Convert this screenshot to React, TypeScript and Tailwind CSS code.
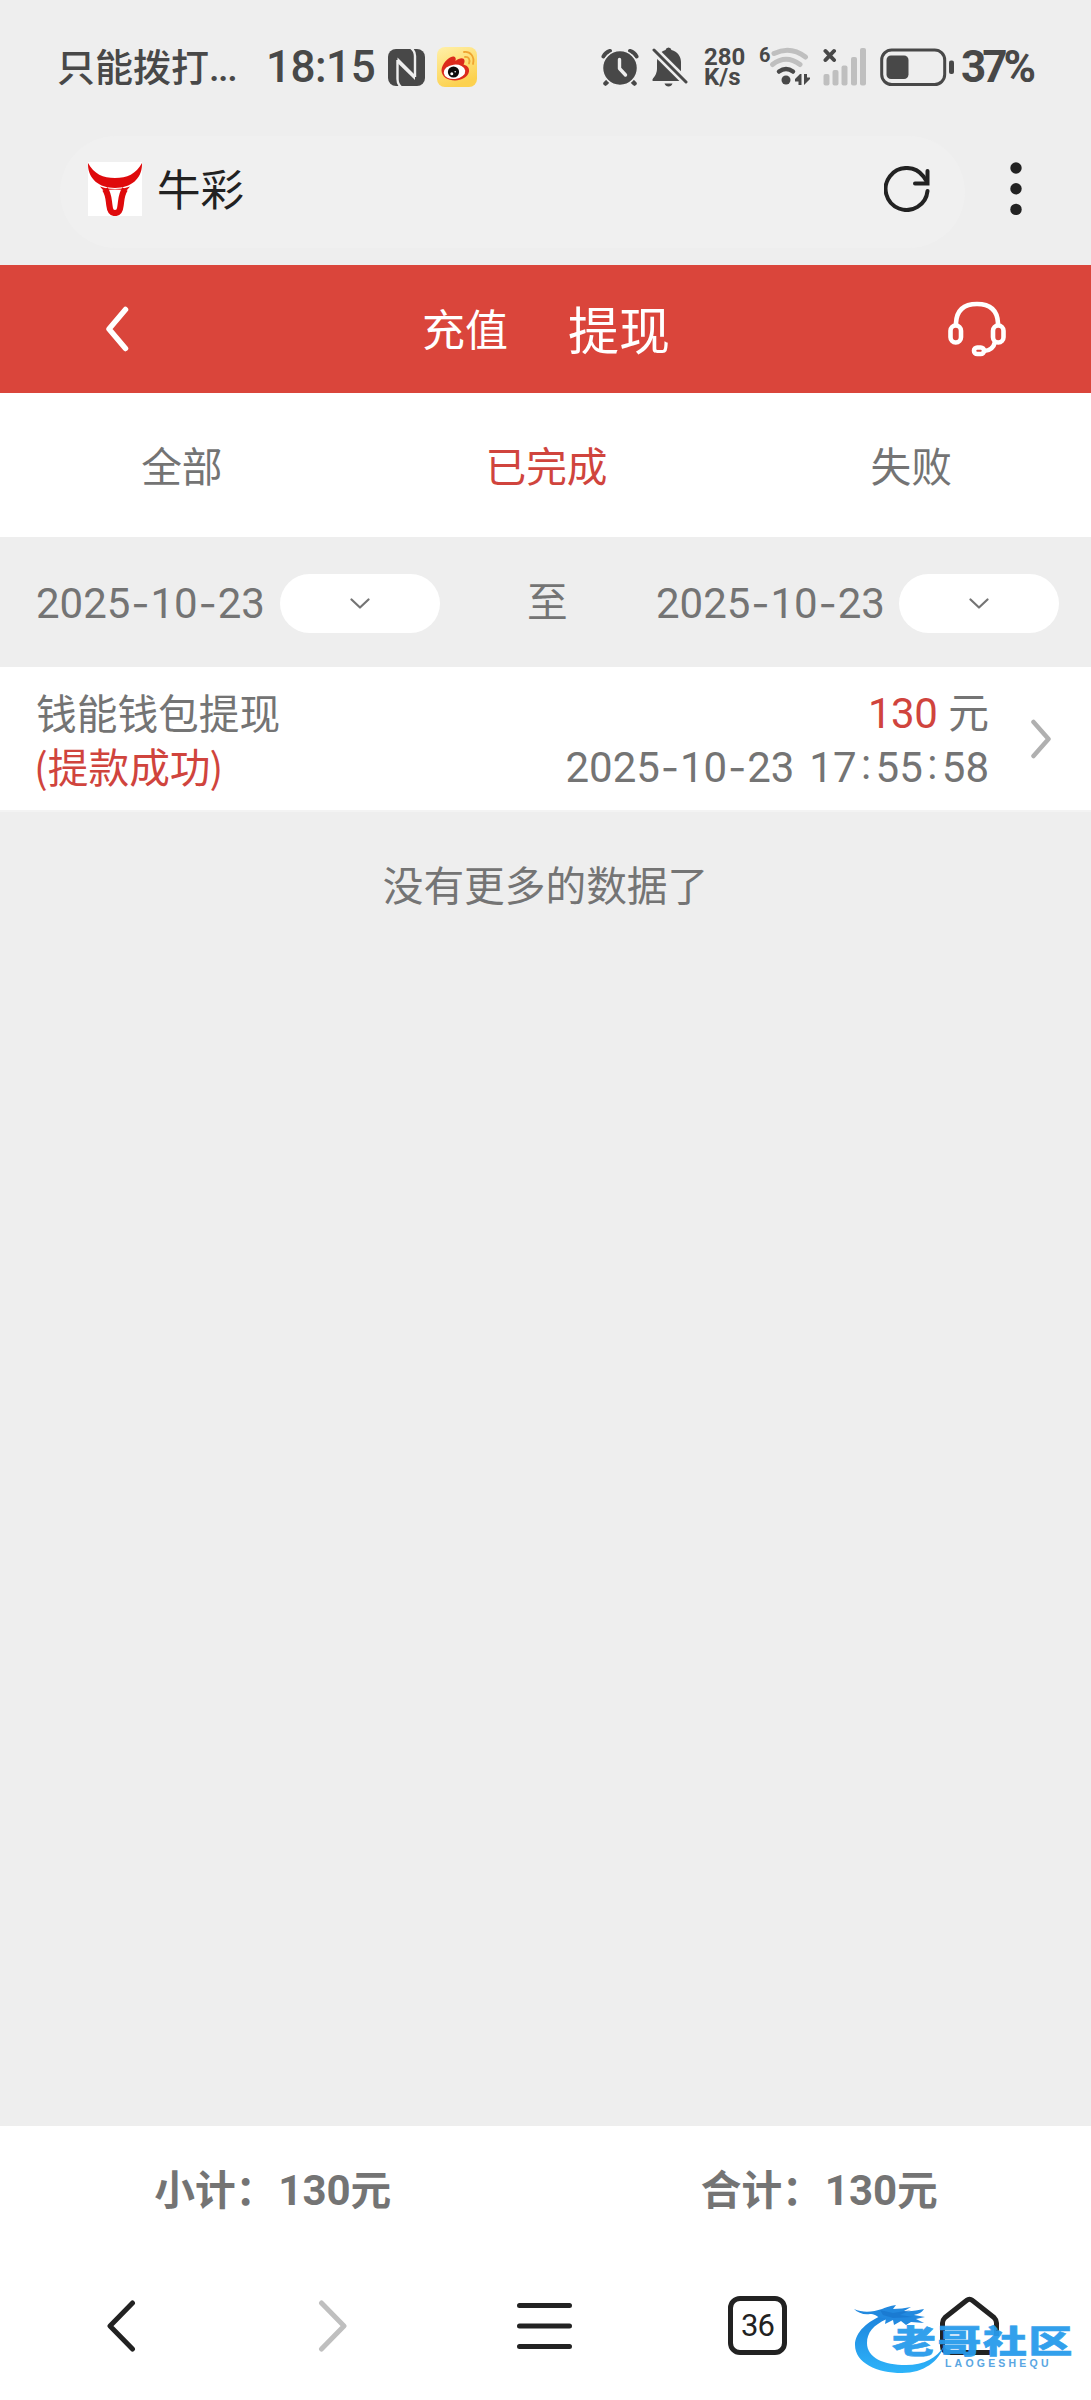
import React from "react";

const cjk = "font-['Noto_Sans_CJK_SC',sans-serif]";

/** Digits with wide dashes and colons, as in a DIN-like face. */
function Stamp({ text }: { text: string }) {
  return (
    <span className="font-[Roboto,sans-serif] text-[42px] whitespace-pre">
      {text.split(/([-: ])/).map((part, i) => {
        if (part === "-")
          return (
            <span key={i} className="inline-block w-[20px] text-center font-[Inter,sans-serif] text-[40px]">
              -
            </span>
          );
        if (part === ":")
          return (
            <span key={i} className="relative -top-[3px] inline-block w-[19px] text-center">
              :
            </span>
          );
        if (part === " ")
          return (
            <span key={i} className="inline-block w-[15px]">
              {" "}
            </span>
          );
        return <span key={i}>{part}</span>;
      })}
    </span>
  );
}

function NfcIcon() {
  return (
    <svg className="ml-[14px] size-[37px]" viewBox="0 0 37 37" fill="none">
      <rect width="37" height="37" rx="8" fill="#484848" />
      <path d="M9.500 11V30Q9.500 35 13 38" stroke="#eeeeee" strokeWidth="2.400" />
      <path d="M9.500 8.500L27 26V31L9.500 14Z" fill="#eeeeee" />
      <path d="M27 28V7Q27 2 23 -1" stroke="#eeeeee" strokeWidth="2.400" />
    </svg>
  );
}

function WeiboIcon() {
  return (
    <svg className="ml-[12px] size-[40px]" viewBox="0 0 40 40" fill="none">
      <defs>
        <linearGradient id="wb" x1="0" y1="0" x2="0.4" y2="1">
          <stop offset="0" stopColor="#fff0a8" />
          <stop offset="1" stopColor="#fcd14f" />
        </linearGradient>
      </defs>
      <rect width="40" height="40" rx="8" fill="url(#wb)" />
      <path
        d="M4.500 23C5 17 11 10 16 9.500C19 9.500 19 12 18.500 14C22 11 27 10 27.500 13.500C27.800 15 27 16.500 26.500 17.500C30 18.500 32.500 20.500 32 24.500C31 30 24.500 33.500 18 33.500C11 33.500 4.500 30 4.500 23Z"
        fill="#dc2a1c"
      />
      <ellipse cx="17.500" cy="24.800" rx="10.800" ry="7.200" fill="#fff" transform="rotate(-6 17.500 24.800)" />
      <circle cx="16.500" cy="25" r="5.600" fill="#0c0c0c" />
      <circle cx="14.800" cy="26.800" r="1.500" fill="#fff" />
      <circle cx="18.200" cy="24.800" r="0.800" fill="#fff" />
      <path d="M27 5C33 4 38 9.500 36 17" stroke="#efa532" strokeWidth="1.800" strokeLinecap="round" />
      <path d="M28 10C31.500 9.500 33.500 12.500 32 16.500" stroke="#efa532" strokeWidth="1.800" strokeLinecap="round" />
    </svg>
  );
}

function AlarmIcon() {
  return (
    <svg className="h-[38px] w-[38px]" viewBox="0 0 38 38" fill="none">
      <g stroke="#484848" strokeLinecap="round">
        <path d="M2.500 8.500Q4.500 4.500 9 3" strokeWidth="4" />
        <path d="M35.500 8.500Q33.500 4.500 29 3" strokeWidth="4" />
        <path d="M8 32L4.500 35.500M30 32L33.500 35.500" strokeWidth="4.500" />
      </g>
      <circle cx="19" cy="20" r="17.500" fill="#484848" stroke="#eeeeee" strokeWidth="1.500" />
      <path d="M18.500 11.500V20.500L24.500 27" stroke="#eeeeee" strokeWidth="3.400" strokeLinecap="round" strokeLinejoin="round" />
    </svg>
  );
}

function MutedBellIcon() {
  return (
    <svg className="ml-[13px] h-[40px] w-[36px]" viewBox="0 0 36 40" fill="none">
      <path
        d="M13.500 3Q14 0.500 16.500 0.500Q19 0.500 19.500 3C25.500 4.500 29 9.500 29 15V25Q31 30 35 34H1.500Q-0.500 34 1 31.500Q5 27 5 22V15C5 9.500 8 4.500 13.500 3Z"
        fill="#484848"
      />
      <path d="M12.500 36.500H20.500Q19.500 39.500 16.500 39.500Q13.500 39.500 12.500 36.500Z" fill="#484848" />
      <path d="M1.500 2.500L35 36" stroke="#eeeeee" strokeWidth="8" />
      <path d="M28 34L36 27V38L30 36Z" fill="#eeeeee" />
      <path d="M2 3L34 35" stroke="#484848" strokeWidth="3" strokeLinecap="round" />
    </svg>
  );
}

function WifiIcon() {
  return (
    <svg className="h-[40px] w-[51px]" viewBox="0 0 51 40" fill="none">
      <g strokeLinecap="round" strokeWidth="5">
        <path d="M15 6.500Q31.500 -1.500 46.500 10" stroke="#bfbfbf" />
        <path d="M13.500 17.500Q27 7 41 17.500" stroke="#bfbfbf" />
        <path d="M20 24.500Q27 19.500 34 24.500" stroke="#484848" strokeWidth="4.500" />
      </g>
      <circle cx="27" cy="33" r="4.500" fill="#484848" />
      <path d="M42.500 27V38H39.500V34.500H36V32L41 27ZM45 27V38L51 32V30.500H48V27Z" fill="#484848" />
    </svg>
  );
}

function SignalIcon() {
  return (
    <svg className="ml-[13px] h-[38px] w-[44px]" viewBox="0 0 44 38" fill="none">
      <path d="M2.500 3L11 12M11 3L2.500 12" stroke="#484848" strokeWidth="4" strokeLinecap="round" />
      <g fill="#bfbfbf">
        <rect x="0.500" y="26" width="6" height="11.500" rx="2" />
        <rect x="9.500" y="22" width="6" height="15.500" rx="2" />
        <rect x="18.500" y="17.500" width="6" height="20" rx="2" />
        <rect x="28" y="9" width="6" height="28.500" rx="2" />
        <rect x="37" y="0" width="6" height="37.500" rx="2" />
      </g>
    </svg>
  );
}

function BatteryIcon() {
  return (
    <svg className="ml-[13px] h-[38px] w-[74px]" viewBox="0 0 74 38" fill="none">
      <rect x="1.700" y="2" width="63" height="34.500" rx="10" stroke="#484848" strokeWidth="3" />
      <rect x="6.500" y="7.500" width="22" height="23.500" rx="4.500" fill="#484848" />
      <rect x="69" y="12.500" width="5" height="13.500" rx="2" fill="#484848" />
    </svg>
  );
}

function BullLogo() {
  return (
    <svg className="size-[54px] bg-white" viewBox="0 0 54 54">
      <path d="M0 1C6 12 15 16 27 16C39 16 48 12 54 1C54.500 16 44 26 27 26C10 26 -0.500 16 0 1Z" fill="#df0a0c" />
      <path d="M12 24.500Q18 27 27 27Q36 27 42 24.500L39 28Q27 27 15 28Z" fill="#df0a0c" />
      <path
        d="M17 27C21 33 20.500 38 21.500 44C22 49 23.500 51 27 51C30.500 51 32 49 32.500 44C33.500 38 33 33 37 27"
        fill="none"
        stroke="#df0a0c"
        strokeWidth="6.200"
      />
    </svg>
  );
}

function Pill() {
  return (
    <span className="flex h-[59px] w-[160px] items-center justify-center rounded-full bg-white">
      <svg className="h-[12px] w-[20px]" viewBox="0 0 20 12" fill="none">
        <path d="M1.500 1.500L10 9.500L18.500 1.500" stroke="#747474" strokeWidth="2.200" strokeLinecap="round" strokeLinejoin="round" />
      </svg>
    </span>
  );
}

function Watermark() {
  return (
    <div className="absolute top-[179px] left-[853px] h-[72px] w-[225px]">
      <svg className="absolute top-0 left-0 h-[72px] w-[92px]" viewBox="0 0 92 72">
        <defs>
          <linearGradient id="ring" x1="0" y1="0" x2="0" y2="1">
            <stop offset="0" stopColor="#1e83dc" />
            <stop offset="1" stopColor="#2db4fa" />
          </linearGradient>
        </defs>
        <path
          d="M30 10C15 16 2 27 2 40C2 58 24 68 49 68C71 68 86 56 91 41C84 53 71 60 53 60C31 60 14 53 14 38C14 28 20 20 34 14Z"
          fill="url(#ring)"
        />
        <path
          d="M1 4C10 8 20 7 29 4C33 2 37 1 43 0L40 4C46 4 52 3 58 2L51 6C58 7 64 5 71 4C69 8 64 9 61 10L72 12L63 14L71 18L58 17L53 20L48 16L41 20L40 15L32 19L33 13C24 14 23 8 17 9C11 10 5 8 1 4Z"
          fill="#2289df"
        />
        <path d="M27 5L40 8L58 5L47 10L60 12L40 13L30 10Z" fill="#1672c9" opacity="0.600" />
      </svg>
      <span
        className={`absolute top-[18px] left-[39px] origin-top-left scale-x-[1.370] text-[32px] leading-[32px] font-black tracking-[1.200px] whitespace-nowrap text-[#289bec] opacity-95 [-webkit-text-stroke:0.600px_#289bec] ${cjk}`}
      >
        老哥社区
      </span>
      <span className="absolute top-[53px] left-[92px] font-['Liberation_Sans',sans-serif] text-[10.500px] leading-[11px] font-bold tracking-[3.200px] whitespace-nowrap text-[#5aa6e2]">
        LAOGESHEQU
      </span>
    </div>
  );
}

export default function App() {
  return (
    <div className={`relative flex h-[2400px] w-[1091px] flex-col overflow-hidden bg-[#eeeeee] text-[40.700px] text-[#747474] ${cjk}`}>
      <div className="flex h-[134px] shrink-0 items-center pl-[57px] text-[#484848]">
        <span className="w-[209px] pb-[2px] text-[38px] leading-none font-medium whitespace-nowrap">
          只能拨打<span className="font-[Roboto,sans-serif] tracking-[-1.500px]">...</span>
        </span>
        <span className="w-[108px] font-[Roboto,sans-serif] text-[44px] leading-none font-medium tracking-[-0.500px]">18:15</span>
        <NfcIcon />
        <WeiboIcon />
        <span className="ml-[124px] flex items-center">
          <AlarmIcon />
          <MutedBellIcon />
          <span className="ml-[16px] flex w-[42px] flex-col font-[Roboto,sans-serif] text-[24px] leading-[20px] font-bold">
            <span>280</span>
            <span>K/s</span>
          </span>
          <span className="relative ml-[13px] flex">
            <span className="absolute -top-[3px] left-0 font-[Roboto,sans-serif] text-[20px] leading-[22px] font-bold">6</span>
            <WifiIcon />
          </span>
          <SignalIcon />
          <BatteryIcon />
          <span className="ml-[7px] font-[Roboto,sans-serif] text-[44px] leading-none font-bold tracking-[-4px]">37%</span>
        </span>
      </div>

      <div className="flex h-[131px] shrink-0 items-start pt-[2px] pl-[60px]">
        <div className="flex h-[112px] w-[905px] items-center rounded-full bg-[#f0f0f0] pr-[35px] pb-[7px] pl-[28px] text-[#222]">
          <BullLogo />
          <span className="ml-[15px] pb-[2px] text-[43.500px] leading-none">牛彩</span>
          <svg className="ml-auto size-[46px]" viewBox="0 0 46 46" fill="none" stroke="#222" strokeWidth="4" strokeLinecap="round">
            <path d="M43.500 25A21 21 0 1 1 39.500 10.500L43 16" strokeLinejoin="round" />
            <path d="M43.500 5V17.500H31" />
          </svg>
        </div>
        <svg className="mt-[26px] ml-[45px] h-[54px] w-[12px]" viewBox="0 0 12 54" fill="#222">
          <circle cx="6" cy="6" r="5.700" />
          <circle cx="6" cy="26.800" r="5.700" />
          <circle cx="6" cy="47.400" r="5.700" />
        </svg>
      </div>

      <header className="flex h-[128px] shrink-0 items-center bg-[#da453b] text-white">
        <svg className="ml-[105px] h-[46px] w-[24px]" viewBox="0 0 24 46" fill="none">
          <path d="M20.500 3.500L4 23L20.500 42.500" stroke="#fff" strokeWidth="5.500" strokeLinecap="round" strokeLinejoin="round" />
        </svg>
        <span className="ml-[293px] pb-[3px] text-[43px] leading-none">充值</span>
        <span className="ml-[60px] pb-[2px] text-[51px] leading-none">提现</span>
        <svg className="ml-auto mr-[84px] h-[56px] w-[60px]" viewBox="0 0 60 56" fill="none" stroke="#fff" strokeWidth="4.600">
          <path d="M9 25V22Q10 3 30 3Q50 3 51 22V25" />
          <rect x="3.500" y="24.500" width="10.500" height="17" rx="5.200" />
          <rect x="46" y="24.500" width="10.500" height="17" rx="5.200" />
          <path d="M48 41Q46 49.500 37 50" />
          <rect x="27" y="46.500" width="10" height="6.500" rx="3.200" />
        </svg>
      </header>

      <nav className="grid h-[144px] shrink-0 grid-cols-3 items-center bg-white pb-px text-center">
        <span>全部</span>
        <span className="pl-[2px] text-[#d0443d]">已完成</span>
        <span className="pl-[4px]">失败</span>
      </nav>

      <div className="flex h-[130px] shrink-0 items-center pt-[3px] pl-[36px]">
        <span className="w-[244px] pb-[2px]">
          <Stamp text="2025-10-23" />
        </span>
        <Pill />
        <span className="ml-[87px] w-[129px] pb-[6px] leading-none">至</span>
        <span className="w-[243px] pb-[2px]">
          <Stamp text="2025-10-23" />
        </span>
        <Pill />
      </div>

      <div className="flex h-[145px] shrink-0 items-center border-b-2 border-[#f3f3f3] bg-white pt-px pl-[36px]">
        <div className="flex flex-col leading-[54px]">
          <span>钱能钱包提现</span>
          <span className="-ml-[2px] text-[#d0443d]">
            (提款成功<span className="-ml-px">)</span>
          </span>
        </div>
        <div className="ml-auto flex flex-col items-end leading-[54px]">
          <span className="flex items-baseline">
            <span className="mr-[11px] font-[Roboto,sans-serif] text-[42px] tracking-[-0.500px] text-[#d0443d]">130</span>元
          </span>
          <Stamp text="2025-10-23 17:55:58" />
        </div>
        <svg className="mr-[39px] ml-[41px] h-[40px] w-[22px]" viewBox="0 0 22 40" fill="none">
          <path d="M3.500 3L18.500 20L3.500 37" stroke="#b0b0b0" strokeWidth="4.500" strokeLinecap="round" strokeLinejoin="round" />
        </svg>
      </div>

      <p className="mt-[42px] text-center leading-[60px]">没有更多的数据了</p>

      <footer className="relative mt-auto h-[274px] shrink-0 bg-white">
        <div className="grid h-[127px] grid-cols-2 items-center text-center font-bold">
          <span>
            小计：<span className="ml-[2px] font-[Roboto,sans-serif] text-[42px]">130</span>元
          </span>
          <span className="pl-[2px]">
            合计：<span className="ml-[2px] font-[Roboto,sans-serif] text-[42px]">130</span>元
          </span>
        </div>
        <div className="flex h-[145px] items-center text-[#222]">
          <svg className="ml-[106px] h-[52px] w-[30px]" viewBox="0 0 30 52" fill="none">
            <path d="M26.500 3L4 26L26.500 49" stroke="#222" strokeWidth="5" strokeLinecap="round" strokeLinejoin="round" />
          </svg>
          <svg className="ml-[182px] h-[52px] w-[30px]" viewBox="0 0 30 52" fill="none">
            <path d="M3.500 3L26 26L3.500 49" stroke="#bfbfbf" strokeWidth="5" strokeLinecap="round" strokeLinejoin="round" />
          </svg>
          <svg className="ml-[168px] h-[48px] w-[57px]" viewBox="0 0 57 48" stroke="#222" strokeWidth="5" strokeLinecap="round">
            <path d="M3.500 3.500H53.500M3.500 24H53.500M3.500 44.500H53.500" />
          </svg>
          <span className="ml-[155px] flex size-[59px] items-center justify-center rounded-[12px] border-[5px] border-[#222] font-[Roboto,sans-serif] text-[31px] leading-none tracking-[-1px]">
            36
          </span>
          <svg className="ml-[152px] h-[60px] w-[61px]" viewBox="0 0 61 60" fill="none">
            <path
              d="M51 56.500H10Q3.500 56 3.500 50V27Q3.500 24 6 21.500L27.500 4.500Q30.500 2 33.500 4.500L55 21.500Q57.500 24 57.500 27V40"
              stroke="#222"
              strokeWidth="5"
              strokeLinejoin="round"
            />
          </svg>
        </div>
        <Watermark />
      </footer>
    </div>
  );
}
